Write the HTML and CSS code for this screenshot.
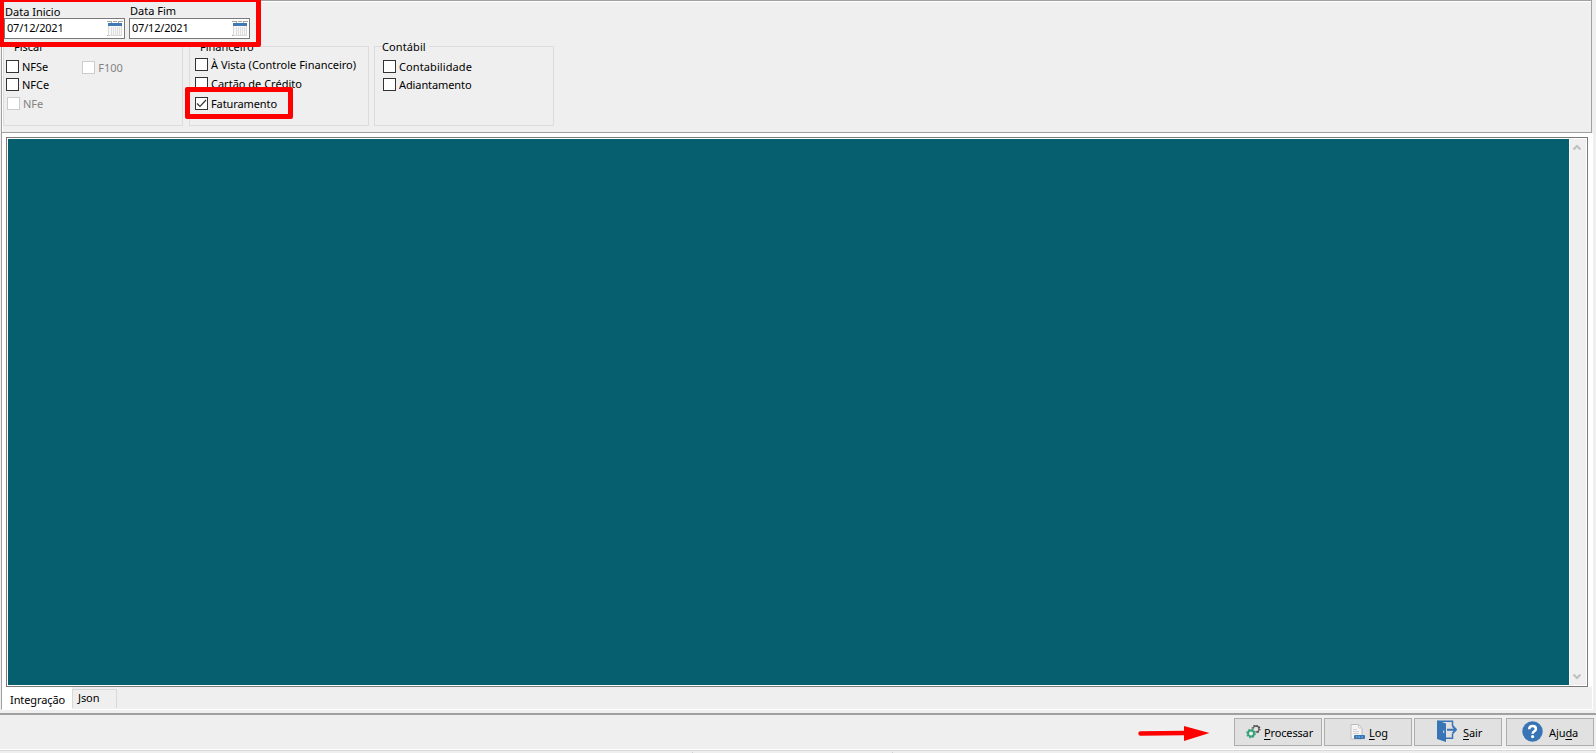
FILE: index.html
```
<!DOCTYPE html>
<html lang="pt-BR">
  <head>
    <meta charset="utf-8">
    <title>Integração</title>
    <link rel="stylesheet" href="styles.css">
  </head>
  <body>
    <div class="window">
      <div class="filters">
        <div class="dates">
          <div class="date-field">
            <label class="low">Data Inicio</label>
            <div class="date-input">
              <span>07/12/2021</span>
              <svg width="16" height="15" viewBox="0 0 16 15" shape-rendering="crispEdges">
                <path fill="#d9d9d9" d="M1 2h14v13H1z"/>
                <path fill="#f7f7f7" d="M2 5h12v9H2z"/>
                <path fill="#dedede" d="M4 6h1v8H4zM6 6h1v8H6zM8 6h1v8H8zM10 6h1v8h-1zM12 6h1v8h-1z"/>
                <path fill="#3f78b4" d="M1 2h14v3H1z"/>
                <path fill="#a5a5a5" d="M0 0h5v1H0zM6 0h4v1H6zM11 0h5v1h-5zM4 1h1v1H4zM11 1h1v1h-1zM0 14h1v1H0z"/>
              </svg>
            </div>
          </div>
          <div class="date-field">
            <label>Data Fim</label>
            <div class="date-input">
              <span>07/12/2021</span>
              <svg width="16" height="15" viewBox="0 0 16 15" shape-rendering="crispEdges">
                <path fill="#d9d9d9" d="M1 2h14v13H1z"/>
                <path fill="#f7f7f7" d="M2 5h12v9H2z"/>
                <path fill="#dedede" d="M4 6h1v8H4zM6 6h1v8H6zM8 6h1v8H8zM10 6h1v8h-1zM12 6h1v8h-1z"/>
                <path fill="#3f78b4" d="M1 2h14v3H1z"/>
                <path fill="#a5a5a5" d="M0 0h5v1H0zM6 0h4v1H6zM11 0h5v1h-5zM4 1h1v1H4zM11 1h1v1h-1zM0 14h1v1H0z"/>
              </svg>
            </div>
          </div>
        </div>

        <div class="groups">
          <div class="group fiscal">
            <span class="group-title">Fiscal</span>
            <div class="column">
              <div class="check"><i class="box"></i><span>NFSe</span></div>
              <div class="check"><i class="box"></i><span>NFCe</span></div>
              <div class="check disabled"><i class="box"></i><span>NFe</span></div>
            </div>
            <div class="column second">
              <div class="check disabled"><i class="box"></i><span>F100</span></div>
            </div>
          </div>
          <div class="group financeiro">
            <span class="group-title">Financeiro</span>
            <div class="column">
              <div class="check"><i class="box"></i><span>À Vista (Controle Financeiro)</span></div>
              <div class="check"><i class="box"></i><span>Cartão de Crédito</span></div>
              <div class="check">
                <i class="box">
                  <svg width="11" height="11" viewBox="0 0 11 11"><path d="M1 5.500l3 3L10 2" fill="none" stroke="#333" stroke-width="1.200"/></svg>
                </i>
                <span class="tight">Faturamento</span>
              </div>
            </div>
          </div>
          <div class="group contabil">
            <span class="group-title">Contábil</span>
            <div class="column">
              <div class="check"><i class="box"></i><span class="wide">Contabilidade</span></div>
              <div class="check"><i class="box"></i><span class="tight">Adiantamento</span></div>
            </div>
          </div>
        </div>
      </div>

      <div class="pages">
        <div class="memo">
          <div class="memo-text"></div>
          <div class="scrollbar">
            <svg width="10" height="7" viewBox="0 0 10 7"><path d="M1.500 5.500L5 2l3.500 3.500" fill="none" stroke="#bfbfbf" stroke-width="2"/></svg>
            <svg width="10" height="7" viewBox="0 0 10 7"><path d="M1.500 1.500L5 5l3.500-3.500" fill="none" stroke="#bfbfbf" stroke-width="2"/></svg>
          </div>
        </div>
        <div class="tabs">
          <div class="tab active">Integração</div>
          <div class="tab">Json</div>
        </div>
      </div>

      <div class="toolbar">
        <svg class="arrow" width="72" height="16" viewBox="0 0 72 16">
          <path d="M2.500 7.500L47 7" stroke="#f00" stroke-width="4.400" stroke-linecap="round"/>
          <path d="M46 0l25.500 7L46 15z" fill="#f00"/>
        </svg>
        <div class="btn processar">
          <svg width="15" height="14" viewBox="0 0 15 14">
            <circle cx="10" cy="4" r="3" fill="none" stroke="#555" stroke-width="1.300"/>
            <circle cx="10" cy="4" r="3.900" fill="none" stroke="#555" stroke-width="1.300" stroke-dasharray="1.400 1.660"/>
            <circle cx="5" cy="8.500" r="4.900" fill="#e1e1e1"/>
            <circle cx="5" cy="8.500" r="3" fill="#eee" stroke="#31a278" stroke-width="1.900"/>
            <circle cx="5" cy="8.500" r="4.200" fill="none" stroke="#31a278" stroke-width="1.200" stroke-dasharray="1.600 1.700"/>
          </svg>
          <span><u>P</u>rocessar</span>
        </div>
        <div class="btn log">
          <svg width="15" height="16" viewBox="0 0 15 16">
            <path d="M1 .5h7.500L12 4v11H1z" fill="#f4f4f4" stroke="#bdbdbd"/>
            <path d="M8.500.5V4H12M3 5.500h4M3 7.500h6M3 9.500h6" fill="none" stroke="#d0d0d0"/>
            <rect x="4" y="11" width="11" height="4" rx="1" fill="#3875b7"/>
            <path d="M6 13h1.500M8.500 13H10M11.500 13H13" stroke="#9fc1e2"/>
          </svg>
          <span><u>L</u>og</span>
        </div>
        <div class="btn sair">
          <svg width="20" height="22" viewBox="0 0 20 22">
            <path d="M0 .5h1l8 3V22l-9-3z" fill="#3875b7"/>
            <path d="M1 1.200h14.500V6M15.500 13.500v4.700H9" fill="none" stroke="#3875b7" stroke-width="1.500"/>
            <path d="M10 9.700h9M15.500 6l3.500 3.700-3.500 3.700" fill="none" stroke="#3875b7" stroke-width="1.900"/>
            <path d="M6.700 10.500v2.500" stroke="#e1e1e1"/>
          </svg>
          <span><u>S</u>air</span>
        </div>
        <div class="btn ajuda">
          <svg width="21" height="21" viewBox="0 0 21 21">
            <circle cx="10.500" cy="10.500" r="10.200" fill="#3875b7"/>
            <path d="M7.200 8.300C7.300 6 8.600 5 10.500 5c2 0 3.400 1.200 3.400 2.900 0 2.300-3.300 2.500-3.300 4.900" fill="none" stroke="#fff" stroke-width="2.500"/>
            <circle cx="10.600" cy="15.600" r="1.600" fill="#fff"/>
          </svg>
          <span>Aju<u>d</u>a</span>
        </div>
      </div>
      <div class="statusbar"><i></i><i></i><i></i></div>

      <!-- highlights -->
      <div class="mark mark-dates"></div>
      <div class="mark mark-fat"></div>
    </div>
  </body>
</html>
```

FILE: styles.css
```
* {
  box-sizing: border-box;
}
body {
  margin: 0;
  background: #efefef;
  color: #000;
  font: 11px/14px "Noto Sans", "Open Sans", sans-serif;
}
.window {
  position: relative;
  width: 1596px;
  height: 753px;
  overflow: hidden;
  display: flex;
  flex-direction: column;
}
.filters {
  width: 1591px;
  height: 133px;
  margin-left: 1px;
  border: 1px solid #a0a0a0;
  box-shadow: inset 1px 1px #fff;
}
.dates {
  display: flex;
  gap: 4px;
  padding: 4px 0 0 2px;
}
.date-field {
  width: 121px;
}
.date-field label {
  display: block;
  height: 13px;
  padding-left: 1px;
  line-height: 12px;
  white-space: nowrap;
}
.date-field label.low {
  line-height: 14px;
}
.date-input {
  display: flex;
  justify-content: space-between;
  height: 21px;
  padding: 2px 1px 0 2px;
  border: 1px solid #7a7a7a;
  background: #fff;
  letter-spacing: -0.2px;
}
.groups {
  display: flex;
  gap: 5px;
  margin-top: 7px;
  padding-left: 1px;
}
.group {
  position: relative;
  display: flex;
  width: 180px;
  height: 80px;
  border: 1px solid #dcdcdc;
}
.fiscal {
  padding: 13px 0 0 2px;
}
.financeiro {
  margin-left: 1px;
  padding: 11px 0 0 5px;
}
.contabil {
  padding: 13px 0 0 8px;
}
.group-title {
  position: absolute;
  top: -7px;
  left: 8px;
  padding: 0 3px 0 2px;
  background: #efefef;
}
.contabil .group-title {
  left: 7px;
  padding-left: 0;
  letter-spacing: 0.1px;
}
.column {
  display: flex;
  flex-direction: column;
  gap: 5px;
}
.second {
  margin: 1px 0 0 33px;
}
.check {
  display: flex;
  align-items: center;
  gap: 3px;
  height: 13px;
  white-space: nowrap;
}
.financeiro .column {
  gap: 6px;
}
.financeiro .check:last-child {
  margin-top: 1px;
}
.tight {
  letter-spacing: -0.1px;
}
.wide {
  letter-spacing: 0.1px;
}
.disabled {
  color: #838383;
}
.fiscal .column:not(.second) .disabled {
  margin: 1px 0 0 1px;
}
.box {
  flex: none;
  width: 13px;
  height: 13px;
  border: 1px solid #333;
  background: #fff;
}
.box svg {
  display: block;
}
.disabled .box {
  border-color: #ccc;
}
.pages {
  width: 1592px;
  height: 577px;
  margin-left: 1px;
  padding: 4px 0 0 4px;
  border-left: 1px solid #a0a0a0;
  border-right: 1px solid #fff;
  border-bottom: 1px solid #fff;
  background: linear-gradient(#fff 554px, #efefef 554px);
}
.memo {
  display: flex;
  width: 1582px;
  height: 550px;
  padding: 1px;
  border: 1px solid #7a7a7a;
  background: #fff;
}
.memo-text {
  flex: 1;
  background: #055f6e;
}
.scrollbar {
  display: flex;
  flex-direction: column;
  align-items: center;
  justify-content: space-between;
  width: 16px;
  margin-left: 1px;
  padding: 5px 2px 5px 0;
  background: #efefef;
}
.tabs {
  display: flex;
  align-items: flex-start;
  margin-left: -4px;
}
.tab {
  width: 45px;
  height: 19px;
  margin-top: 2px;
  padding: 1px 0 0 5px;
  border: 1px solid #d9d9d9;
  border-bottom: 0;
  letter-spacing: -0.1px;
}
.tab.active {
  width: 70px;
  height: 22px;
  margin-top: 0;
  padding: 6px 0 0 8px;
  border: 0;
  background: #fff;
}
.toolbar {
  display: flex;
  align-items: flex-start;
  height: 39px;
  margin-top: 3px;
  padding: 3px 2px 0 0;
  border-top: 2px solid #a0a0a0;
}
.arrow {
  margin: 8px 24px 0 1138px;
}
.btn {
  display: flex;
  align-items: center;
  width: 88px;
  height: 28px;
  margin-right: 2px;
  padding-top: 1px;
  border: 1px solid #adadad;
  background: #e1e1e1;
  letter-spacing: -0.1px;
  white-space: nowrap;
}
.btn u {
  text-underline-offset: 2px;
}
.processar {
  padding-left: 11px;
  gap: 3px;
  letter-spacing: -0.15px;
}
.processar svg,
.log svg {
  margin-top: -1px;
}
.log {
  padding-left: 25px;
  gap: 4px;
}
.sair {
  margin-right: 4px;
  padding-left: 22px;
  gap: 6px;
}
.sair svg,
.ajuda svg {
  margin-top: -3px;
}
.ajuda {
  margin-right: 0;
  padding-left: 15px;
  gap: 6px;
}
.statusbar {
  display: flex;
  height: 3px;
  margin-top: -2px;
  padding-top: 1px;
  border-top: 1px solid #d7d7d7;
  box-shadow: 0 -1px #fff;
}
.statusbar i {
  width: 200px;
  border-right: 1px solid #d0d0d0;
}
.statusbar i:first-child {
  width: 693px;
}
.statusbar i:last-child {
  border: 0;
}
.mark {
  position: absolute;
  border: 5px solid #f00;
  border-radius: 2px;
}
.mark-dates {
  top: -3px;
  left: -1px;
  width: 262px;
  height: 50px;
}
.mark-fat {
  top: 87px;
  left: 185px;
  width: 108px;
  height: 32px;
}
```
